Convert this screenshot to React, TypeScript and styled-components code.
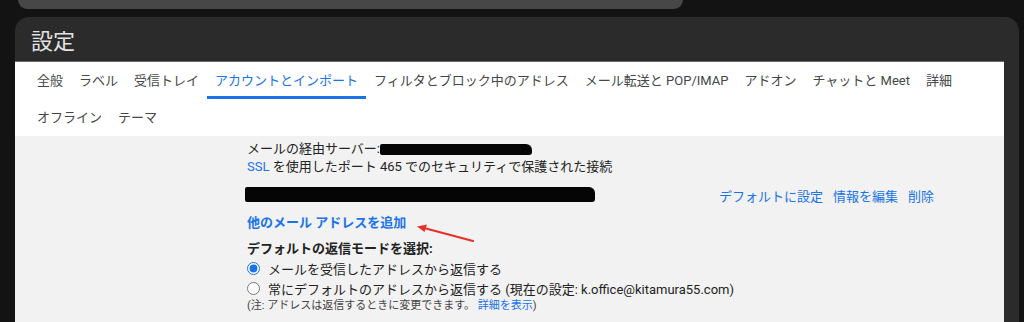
import React from 'react';
import styled, { createGlobalStyle } from 'styled-components';

const GlobalStyle = createGlobalStyle`
  html, body {
    margin: 0;
    padding: 0;
    background: #131313;
    overflow: hidden;
  }
  body {
    font-family: Roboto, "Noto Sans CJK JP", "Noto Sans", sans-serif;
    -webkit-font-smoothing: antialiased;
  }
`;

const Page = styled.div`
  width: 1024px;
  height: 322px;
  background: #131313;
  overflow: hidden;
`;

const SearchBar = styled.div`
  width: 665px;
  height: 9px;
  margin-left: 18px;
  background: #474747;
  border-radius: 0 0 16px 16px;
`;

const Card = styled.div`
  width: 989px;
  margin: 8px 0 0 15px;
  padding-right: 15px;
  background: #2b2b2b;
  border-radius: 14px 14px 0 0;
  height: 305px;
`;

const Header = styled.h1`
  margin: 0;
  height: 44px;
  padding-left: 16px;
  font-size: 22px;
  font-weight: 400;
  line-height: 49px;
  color: #e3e3e3;
  border-bottom: 1px solid #6a6a6a;
`;

const Tabs = styled.nav`
  display: flex;
  flex-wrap: wrap;
  background: #fff;
  padding-left: 14px;
`;

const Tab = styled.div<{ $active?: boolean }>`
  height: 37px;
  box-sizing: border-box;
  padding: 0 8px;
  font-size: 13px;
  line-height: 38px;
  color: ${p => (p.$active ? '#1a73e8' : '#444746')};
  border-bottom: 3px solid ${p => (p.$active ? '#1a73e8' : 'transparent')};
  white-space: nowrap;
`;

const Content = styled.div`
  position: relative;
  background: #f2f2f2;
  height: 187px;
  padding: 4px 0 0 232px;
  box-sizing: border-box;
  font-size: 13px;
  color: #222;
`;

const Column = styled.div`
  width: 690px;
`;

const Line = styled.div<{ $h?: number }>`
  height: ${p => p.$h ?? 18}px;
  line-height: ${p => p.$h ?? 18}px;
  display: flex;
  align-items: center;
  white-space: nowrap;
`;

const Link = styled.span<{ $bold?: boolean }>`
  color: #1a73e8;
  font-weight: ${p => (p.$bold ? 700 : 400)};
`;

const Redact = styled.span<{ $w: number; $h: number }>`
  display: inline-block;
  width: ${p => p.$w}px;
  height: ${p => p.$h}px;
  background: #050505;
  border-radius: 2px 6px 3px 2px;
`;

const AccountRow = styled.div`
  height: 36px;
  display: flex;
  align-items: center;
  justify-content: space-between;
  margin-left: -2px;
`;

const Actions = styled.div`
  display: flex;
  gap: 10px;
  padding-top: 2px;
  margin-right: 3px;
`;

const Heading = styled.div`
  margin-top: 6px;
  height: 18px;
  line-height: 18px;
  font-weight: 700;
  color: #222;
`;

const RadioRow = styled.label`
  display: flex;
  align-items: center;
  gap: 8px;
  height: 20px;
  white-space: nowrap;
`;

const Radio = styled.input`
  margin: 0;
  width: 13px;
  height: 13px;
  accent-color: #1a73e8;
`;

const Note = styled.div`
  height: 16px;
  line-height: 16px;
  font-size: 11px;
  color: #444;
`;

const Arrow = styled.svg`
  position: absolute;
  left: 395px;
  top: 86px;
`;

const tabs = [
  '全般',
  'ラベル',
  '受信トレイ',
  'アカウントとインポート',
  'フィルタとブロック中のアドレス',
  'メール転送と POP/IMAP',
  'アドオン',
  'チャットと Meet',
  '詳細',
  'オフライン',
  'テーマ',
];

export default function App() {
  return (
    <Page>
      <GlobalStyle />
      <SearchBar />
      <Card>
        <Header>設定</Header>
        <Tabs>
          {tabs.map(t => (
            <Tab key={t} $active={t === 'アカウントとインポート'}>
              {t}
            </Tab>
          ))}
        </Tabs>
        <Content>
          <Column>
            <Line>
              メールの経由サーバー:
              <Redact $w={152} $h={11} />
            </Line>
            <Line>
              <Link>SSL</Link>&nbsp;を使用したポート 465 でのセキュリティで保護された接続
            </Line>
            <AccountRow>
              <Redact $w={350} $h={15} />
              <Actions>
                <Link>デフォルトに設定</Link>
                <Link>情報を編集</Link>
                <Link>削除</Link>
              </Actions>
            </AccountRow>
            <Line $h={22}>
              <Link $bold>他のメール アドレスを追加</Link>
            </Line>
            <Heading>デフォルトの返信モードを選択:</Heading>
            <RadioRow>
              <Radio type="radio" name="reply" defaultChecked />
              メールを受信したアドレスから返信する
            </RadioRow>
            <RadioRow>
              <Radio type="radio" name="reply" />
              常にデフォルトのアドレスから返信する (現在の設定: k.office@kitamura55.com)
            </RadioRow>
            <Note>
              (注: アドレスは返信するときに変更できます。 <Link>詳細を表示</Link>)
            </Note>
          </Column>
          <Arrow width="70" height="24" viewBox="0 0 70 24">
            <line x1="63" y1="19" x2="14" y2="6" stroke="#e8302a" strokeWidth="2.2" strokeLinecap="round" />
            <path d="M7 4.5 L17 2.5 L14.5 10 Z" fill="#e8302a" />
          </Arrow>
        </Content>
      </Card>
    </Page>
  );
}
